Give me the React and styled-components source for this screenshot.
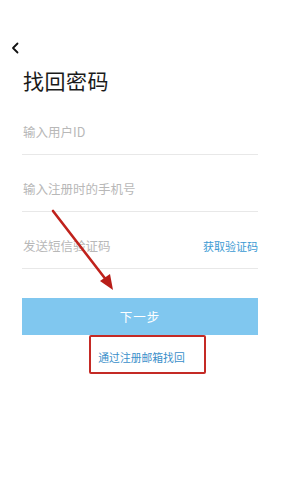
import React from "react";
import styled, { createGlobalStyle } from "styled-components";

const GlobalStyle = createGlobalStyle`
  html, body {
    margin: 0;
    padding: 0;
    background: #fff;
  }
  body {
    font-family: "Noto Sans CJK SC", "Noto Sans", sans-serif;
  }
`;

const Page = styled.div`
  position: relative;
  width: 281px;
  height: 500px;
  overflow: hidden;
  background: #fff;
`;

const TopBar = styled.div`
  padding: 42px 0 0 10px;
  box-sizing: border-box;
  height: 56px;
`;

const BackIcon = styled.svg`
  display: block;
  width: 10px;
  height: 12px;
`;

const Content = styled.div`
  padding: 0 23px 0 22px;
`;

const Title = styled.h1`
  margin: 10px 0 0 1px;
  font-size: 21px;
  line-height: 28px;
  font-weight: 400;
  color: #1a1a1a;
  letter-spacing: 0.5px;
`;

const Form = styled.div`
  display: flex;
  flex-direction: column;
  margin-top: 4px;
`;

const Field = styled.div`
  display: flex;
  align-items: flex-end;
  justify-content: space-between;
  height: 57px;
  box-sizing: border-box;
  padding: 0 0 15px 1px;
  border-bottom: 1px solid #e8e8e8;
`;

const Placeholder = styled.span`
  font-size: 12.5px;
  line-height: 14px;
  color: #b8b8b8;
`;

const CodeLink = styled.span`
  font-size: 11px;
  line-height: 14px;
  color: #3b9ad3;
`;

const NextButton = styled.button`
  margin-top: 29px;
  height: 37px;
  width: 100%;
  border: none;
  border-radius: 0;
  background: #80c7ef;
  color: #fff;
  font-family: inherit;
  font-size: 12.5px;
  letter-spacing: 1px;
  padding: 0;
`;

const EmailRow = styled.div`
  position: relative;
  display: flex;
  justify-content: center;
  margin-top: 15px;
`;

const EmailLink = styled.span`
  font-size: 10.8px;
  line-height: 14px;
  color: #3b8fca;
  margin-left: 3px;
`;

const RedBox = styled.div`
  position: absolute;
  left: 67px;
  top: -15px;
  width: 117px;
  height: 39px;
  box-sizing: border-box;
  border: 2px solid #c42a25;
  border-radius: 2px;
`;

const Annotation = styled.svg`
  position: absolute;
  left: 0;
  top: 0;
  width: 281px;
  height: 500px;
  pointer-events: none;
`;

export default function App() {
  return (
    <>
      <GlobalStyle />
      <Page>
        <TopBar>
          <BackIcon viewBox="0 0 10 12">
            <path
              d="M7.5 1.5 L3 6 L7.5 10.5"
              fill="none"
              stroke="#111"
              strokeWidth="1.8"
              strokeLinecap="round"
              strokeLinejoin="round"
            />
          </BackIcon>
        </TopBar>
        <Content>
          <Title>找回密码</Title>
          <Form>
            <Field>
              <Placeholder>输入用户ID</Placeholder>
            </Field>
            <Field>
              <Placeholder>输入注册时的手机号</Placeholder>
            </Field>
            <Field>
              <Placeholder>发送短信验证码</Placeholder>
              <CodeLink>获取验证码</CodeLink>
            </Field>
            <NextButton>下一步</NextButton>
            <EmailRow>
              <EmailLink>通过注册邮箱找回</EmailLink>
              <RedBox />
            </EmailRow>
          </Form>
        </Content>
        <Annotation viewBox="0 0 281 500">
          <line
            x1="53"
            y1="211"
            x2="107"
            y2="281"
            stroke="#c0221c"
            strokeWidth="2.6"
            strokeLinecap="round"
          />
          <polygon points="113,290 100,281 110,274" fill="#b81d18" />
        </Annotation>
      </Page>
    </>
  );
}
